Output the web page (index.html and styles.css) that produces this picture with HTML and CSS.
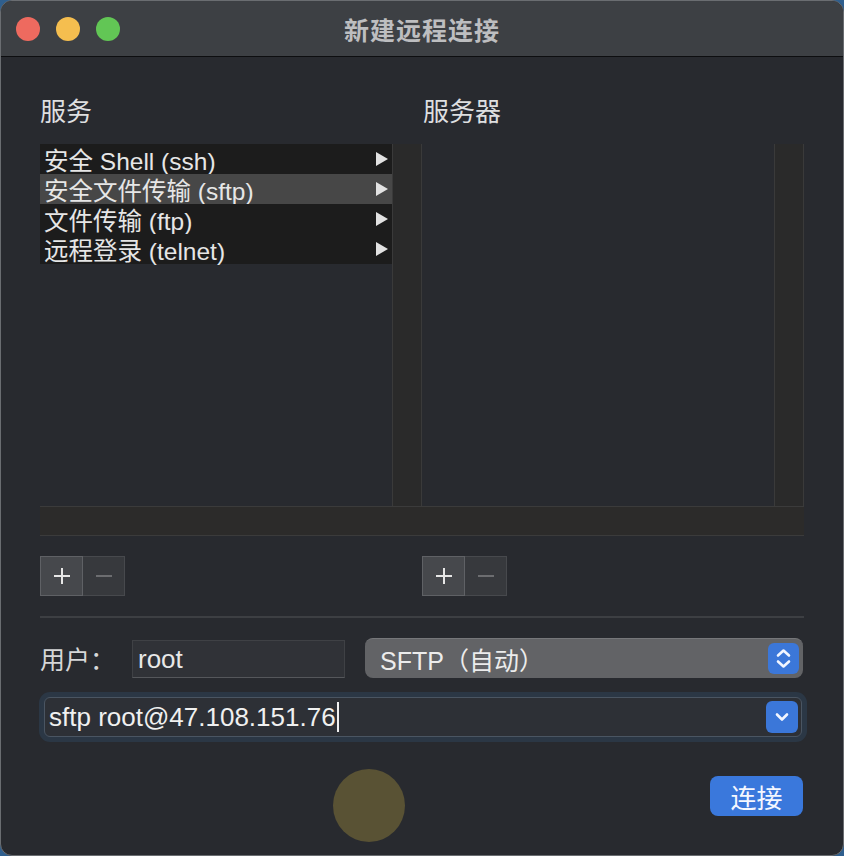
FILE: index.html
```html
<!DOCTYPE html>
<html lang="zh-CN">
<head>
<meta charset="utf-8">
<title>新建远程连接</title>
<link rel="stylesheet" href="styles.css">
</head>
<body>
<div class="window">
  <div class="titlebar">
    <div class="lights">
      <span class="light red"></span>
      <span class="light yellow"></span>
      <span class="light green"></span>
    </div>
    <div class="title">新建远程连接</div>
    <div></div>
  </div>
  <div class="content">
    <div class="panes">
      <div class="pane">
        <div class="pane-label">服务</div>
        <div class="browser">
          <div class="col main">
            <div class="row"><span>安全 Shell (ssh)</span><svg class="arrow" viewBox="0 0 12 14" width="12" height="14"><polygon points="0,0 12,7 0,14"/></svg></div>
            <div class="row selected"><span>安全文件传输 (sftp)</span><svg class="arrow" viewBox="0 0 12 14" width="12" height="14"><polygon points="0,0 12,7 0,14"/></svg></div>
            <div class="row"><span>文件传输 (ftp)</span><svg class="arrow" viewBox="0 0 12 14" width="12" height="14"><polygon points="0,0 12,7 0,14"/></svg></div>
            <div class="row"><span>远程登录 (telnet)</span><svg class="arrow" viewBox="0 0 12 14" width="12" height="14"><polygon points="0,0 12,7 0,14"/></svg></div>
          </div>
          <div class="col narrow"></div>
        </div>
      </div>
      <div class="pane">
        <div class="pane-label">服务器</div>
        <div class="browser">
          <div class="col main"></div>
          <div class="col narrow"></div>
        </div>
      </div>
    </div>
    <div class="hscroll"></div>
    <div class="seg-row">
      <div class="seg">
        <span class="seg-btn add"><svg viewBox="0 0 18 18" width="18" height="18"><path d="M9 1V17M1 9H17"/></svg></span>
        <span class="seg-btn remove"><svg viewBox="0 0 18 18" width="18" height="18"><path d="M1 9H17"/></svg></span>
      </div>
      <div class="seg">
        <span class="seg-btn add"><svg viewBox="0 0 18 18" width="18" height="18"><path d="M9 1V17M1 9H17"/></svg></span>
        <span class="seg-btn remove"><svg viewBox="0 0 18 18" width="18" height="18"><path d="M1 9H17"/></svg></span>
      </div>
    </div>
    <div class="sep"></div>
    <div class="user-row">
      <span class="user-label">用户：</span>
      <div class="text-field">root</div>
      <div class="popup">
        <span class="popup-text">SFTP（自动）</span>
        <span class="stepper"><svg viewBox="0 0 31 31" width="31" height="31"><path d="M10 12.5L15.5 7.5L21 12.5M10 18.5L15.5 23.5L21 18.5"/></svg></span>
      </div>
    </div>
    <div class="combo">
      <span class="combo-text">sftp root@47.108.151.76<span class="caret"></span></span>
      <span class="combo-btn"><svg viewBox="0 0 32 32" width="32" height="32"><path d="M11 13.5L16 18.5L21 13.5"/></svg></span>
    </div>
    <div class="actions">
      <button class="connect">连接</button>
    </div>
  </div>
  <div class="click-dot"></div>
</div>
</body>
</html>
```

FILE: styles.css
```css
* { box-sizing: border-box; }

html, body {
  margin: 0;
  padding: 0;
}

body {
  background: #2f5f8e;
  width: 844px;
  height: 856px;
  font-family: "Liberation Sans", "Noto Sans CJK SC", sans-serif;
  overflow: hidden;
}

.window {
  position: relative;
  width: 844px;
  height: 856px;
  border: 1px solid #6a6d71;
  border-radius: 12px;
  background: #282a2f;
  overflow: hidden;
}

.titlebar {
  height: 56px;
  background: #3d4044;
  border-bottom: 1px solid #0d0e10;
  display: grid;
  grid-template-columns: 1fr auto 1fr;
  align-items: center;
}

.lights {
  display: flex;
  gap: 16px;
  padding-left: 15px;
}

.light {
  width: 24px;
  height: 24px;
  border-radius: 50%;
}
.light.red { background: #ee6a5f; }
.light.yellow { background: #f5be4f; }
.light.green { background: #62c655; }

.title {
  font-size: 25px;
  font-weight: 700;
  color: #bdbec0;
  letter-spacing: 1px;
}

.content {
  padding: 0 39px;
}

.panes {
  display: grid;
  grid-template-columns: 382px 382px;
}

.pane-label {
  margin-top: 40px;
  height: 30px;
  line-height: 30px;
  margin-bottom: 17px;
  font-size: 26px;
  color: #dedfe0;
}

.pane + .pane .pane-label {
  padding-left: 1px;
}

.browser {
  display: flex;
  height: 362px;
}

.col.main {
  width: 352px;
  display: flex;
  flex-direction: column;
}

.col.narrow {
  flex: 1;
  background: #2a2a2a;
  border-left: 1px solid #3a3a3a;
  border-right: 1px solid #3a3a3a;
}

.row {
  height: 30px;
  background: #1c1c1c;
  display: flex;
  align-items: center;
  justify-content: space-between;
  padding: 0 4px 0 4px;
  font-size: 24.5px;
  color: #e6e6e6;
  white-space: nowrap;
}

.row.selected {
  background: #474747;
}

.arrow {
  fill: #e2e2e2;
}

.hscroll {
  height: 30px;
  background: #2c2b2a;
  border-top: 1px solid #3b3b3b;
  border-bottom: 1px solid #3b3b3b;
}

.seg-row {
  margin-top: 20px;
  display: grid;
  grid-template-columns: 382px 382px;
}

.seg {
  display: flex;
}

.seg-btn {
  width: 43px;
  height: 40px;
  display: flex;
  align-items: center;
  justify-content: center;
}

.seg-btn svg {
  fill: none;
  stroke-width: 2;
}

.seg-btn.add {
  background: #46484c;
  border: 1px solid #5f6165;
}
.seg-btn.add svg { stroke: #e6e6e6; }

.seg-btn.remove {
  width: 42px;
  background: #37393d;
  border: 1px solid #47494d;
  border-left: none;
}
.seg-btn.remove svg { stroke: #6c6d70; }

.sep {
  margin-top: 20px;
  height: 2px;
  background: #3d3f43;
}

.user-row {
  margin-top: 20px;
  height: 40px;
  display: flex;
  align-items: flex-end;
}

.user-label {
  width: 92px;
  align-self: center;
  font-size: 25px;
  color: #d6d7d8;
  white-space: nowrap;
}

.text-field {
  width: 213px;
  height: 38px;
  background: #303237;
  border: 1px solid #3f4145;
  border-bottom-color: #55575b;
  font-size: 26px;
  line-height: 36px;
  padding-left: 5px;
  color: #e8e8e8;
}

.popup {
  margin-left: 20px;
  width: 438px;
  height: 40px;
  border-radius: 8px;
  background: #626366;
  border-top: 1px solid #76777a;
  display: flex;
  align-items: center;
  justify-content: space-between;
  padding: 0 4px 0 15px;
}

.popup-text {
  font-size: 25px;
  color: #ececec;
}

.stepper {
  width: 31px;
  height: 31px;
  border-radius: 6px;
  background: #3b77d9;
  display: flex;
}

.stepper svg, .combo-btn svg {
  fill: none;
  stroke: #f2f6ff;
  stroke-width: 2.6;
  stroke-linecap: round;
  stroke-linejoin: round;
}

.combo {
  margin: 19px 2px 0 4px;
  height: 40px;
  border-radius: 6px;
  background: #2d3036;
  border: 1px solid #4a5562;
  box-shadow: 0 0 0 5px #2b3745;
  display: flex;
  align-items: center;
  justify-content: space-between;
  padding: 0 3px 0 4px;
}

.combo-text {
  font-size: 26px;
  color: #f0f0f0;
  display: flex;
  align-items: center;
  white-space: nowrap;
}

.caret {
  display: inline-block;
  width: 2px;
  height: 30px;
  background: #f0f0f0;
  margin-left: 1px;
}

.combo-btn {
  width: 32px;
  height: 32px;
  border-radius: 6px;
  background: #3b77d9;
  display: flex;
}

.actions {
  margin-top: 39px;
  display: flex;
  justify-content: flex-end;
  padding-right: 1px;
}

.connect {
  width: 93px;
  height: 40px;
  border: none;
  border-radius: 8px;
  background: #3a78dc;
  color: #f4f7ff;
  font-family: "Liberation Sans", "Noto Sans CJK SC", sans-serif;
  font-size: 26px;
  padding: 0;
}

.click-dot {
  position: absolute;
  left: 332px;
  top: 768px;
  width: 72px;
  height: 73px;
  border-radius: 50%;
  background: #595234;
}
```
